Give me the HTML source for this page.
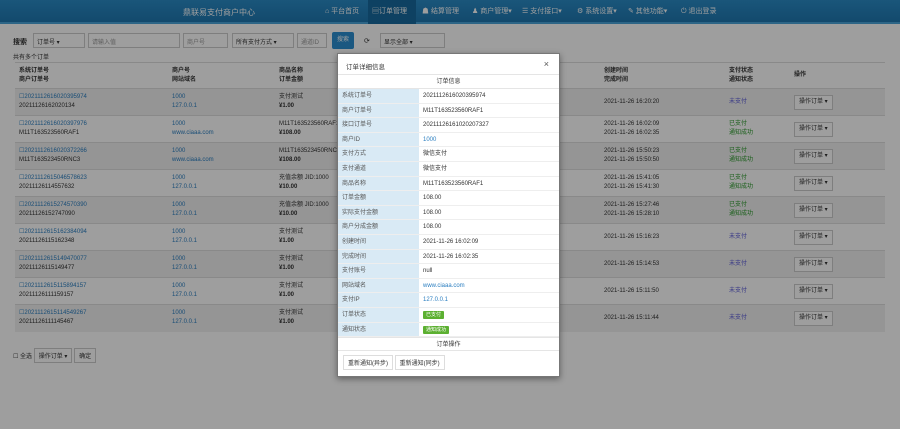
<!DOCTYPE html>
<html><head><meta charset="utf-8"><style>
*{box-sizing:border-box;margin:0;padding:0}
body{width:900px;height:429px;overflow:hidden;background:#fff;font-family:"Liberation Sans","Noto Sans CJK SC",sans-serif;font-size:7px;color:#333;position:relative}
.nav{height:24px;background:linear-gradient(#2a8bc6,#1f77b0);border-bottom:2px solid #4aa3d8;position:relative;color:#fff}
.nav .brand{position:absolute;left:183px;top:7px;font-size:8px}
.nav .item{position:absolute;top:0;height:24px;line-height:24px;font-size:7px}
.bar{position:absolute;top:33px;left:13px;height:16px;font-size:7px}
.inp{position:absolute;top:33px;height:15px;border:1px solid #ccc;background:#fff;color:#999;font-size:6px;padding:3px}
.btn{position:absolute;background:#2d8fd0;color:#fff;border-radius:2px;font-size:6px;text-align:center}
table{position:absolute;left:15px;top:62px;width:870px;border-collapse:collapse;font-size:6px}
td{height:27px;padding:2px 4px;border-top:1px solid #ddd;vertical-align:middle;line-height:9px}
tr:nth-child(even) td{background:#f0f0f0}
.hd td{height:26px;font-weight:bold;color:#333}
.a{color:#2a7ec0}.g{color:#2a9a2a}.p{color:#5a5ad8}
.op{border:1px solid #ccc;background:#fff;padding:2px 4px;display:inline-block}
.ov{position:absolute;left:0;top:0;width:900px;height:429px;background:rgba(0,0,0,.38)}
.modal{position:absolute;left:337px;top:53px;width:223px;height:324px;background:#fff;border:1px solid #777;box-shadow:0 2px 6px rgba(0,0,0,.4)}
.mh{height:21px;border-bottom:1px solid #e5e5e5;padding:7px 8px;font-size:6.5px;position:relative}
.mh span{position:absolute;right:10px;top:5px;font-size:9px;color:#555}
.st{text-align:center;height:14px;line-height:14px;font-size:6px;border-bottom:1px solid #e5e5e5}
.r{height:14.6px;line-height:14.6px;font-size:6px;border-bottom:1px solid #eee;display:flex}
.r b{font-weight:normal;width:81px;background:#d9eaf5;padding-left:4px;color:#555}
.r i{font-style:normal;padding-left:4px}
.lb{background:#5cb031;color:#fff;padding:0 3px;border-radius:1px;font-size:5px;line-height:8px;display:inline-block}
</style></head><body>
<div class="nav"><div class="brand">鼎联易支付商户中心</div>
<div class="item" style="left:325px">⌂ 平台首页</div>
<div class="item" style="left:368px;background:#176a9e;width:48px;padding-left:4px">▤订单管理</div>
<div class="item" style="left:422px">☗ 结算管理</div>
<div class="item" style="left:472px">♟ 商户管理▾</div>
<div class="item" style="left:522px">☰ 支付接口▾</div>
<div class="item" style="left:577px">⚙ 系统设置▾</div>
<div class="item" style="left:628px">✎ 其他功能▾</div>
<div class="item" style="left:681px">⏻ 退出登录</div>
</div>
<div class="bar" style="top:37px;font-weight:bold">搜索</div>
<div class="inp" style="left:33px;width:52px;color:#333">订单号 ▾</div>
<div class="inp" style="left:88px;width:92px">请输入值</div>
<div class="inp" style="left:183px;width:45px">商户号</div>
<div class="inp" style="left:232px;width:62px;color:#333">所有支付方式 ▾</div>
<div class="inp" style="left:297px;width:30px">通道ID</div>
<div class="btn" style="left:332px;top:32px;width:22px;height:17px;line-height:17px">搜索</div>
<div class="bar" style="left:364px;top:37px">⟳</div>
<div class="inp" style="left:380px;width:65px;color:#333">显示全部 ▾</div>
<div class="bar" style="top:52px;font-size:6px">共有多个订单</div>
<table>
<tr class="hd"><td style="width:153px">系统订单号<br>商户订单号</td><td style="width:107px">商户号<br>网站域名</td><td style="width:260px">商品名称<br>订单金额</td><td style="width:65px"></td><td style="width:125px">创建时间<br>完成时间</td><td style="width:65px">支付状态<br>通知状态</td><td>操作</td></tr>
<tr><td><span class="a">☐2021112616020395974</span><br>20211126162020134</td><td class="a">1000<br>127.0.0.1</td><td>支付测试<br><b>¥1.00</b></td><td></td><td>2021-11-26 16:20:20</td><td class="p">未支付</td><td><span class="op">操作订单 ▾</span></td></tr>
<tr><td><span class="a">☐2021112616020397976</span><br>M11T163523560RAF1</td><td class="a">1000<br>www.ciaaa.com</td><td>M11T163523560RAF1<br><b>¥108.00</b></td><td></td><td>2021-11-26 16:02:09<br>2021-11-26 16:02:35</td><td class="g">已支付<br>通知成功</td><td><span class="op">操作订单 ▾</span></td></tr>
<tr><td><span class="a">☐2021112616020372266</span><br>M11T163523450RNC3</td><td class="a">1000<br>www.ciaaa.com</td><td>M11T163523450RNC3<br><b>¥108.00</b></td><td></td><td>2021-11-26 15:50:23<br>2021-11-26 15:50:50</td><td class="g">已支付<br>通知成功</td><td><span class="op">操作订单 ▾</span></td></tr>
<tr><td><span class="a">☐2021112615046578623</span><br>20211126114557632</td><td class="a">1000<br>127.0.0.1</td><td>充值余额 JID:1000<br><b>¥10.00</b></td><td></td><td>2021-11-26 15:41:05<br>2021-11-26 15:41:30</td><td class="g">已支付<br>通知成功</td><td><span class="op">操作订单 ▾</span></td></tr>
<tr><td><span class="a">☐2021112615274570390</span><br>20211126152747090</td><td class="a">1000<br>127.0.0.1</td><td>充值余额 JID:1000<br><b>¥10.00</b></td><td></td><td>2021-11-26 15:27:46<br>2021-11-26 15:28:10</td><td class="g">已支付<br>通知成功</td><td><span class="op">操作订单 ▾</span></td></tr>
<tr><td><span class="a">☐2021112615162384094</span><br>20211126115162348</td><td class="a">1000<br>127.0.0.1</td><td>支付测试<br><b>¥1.00</b></td><td></td><td>2021-11-26 15:16:23</td><td class="p">未支付</td><td><span class="op">操作订单 ▾</span></td></tr>
<tr><td><span class="a">☐2021112615149470077</span><br>20211126115149477</td><td class="a">1000<br>127.0.0.1</td><td>支付测试<br><b>¥1.00</b></td><td></td><td>2021-11-26 15:14:53</td><td class="p">未支付</td><td><span class="op">操作订单 ▾</span></td></tr>
<tr><td><span class="a">☐2021112615115894157</span><br>20211126111159157</td><td class="a">1000<br>127.0.0.1</td><td>支付测试<br><b>¥1.00</b></td><td></td><td>2021-11-26 15:11:50</td><td class="p">未支付</td><td><span class="op">操作订单 ▾</span></td></tr>
<tr><td><span class="a">☐2021112615114549267</span><br>20211126111145467</td><td class="a">1000<br>127.0.0.1</td><td>支付测试<br><b>¥1.00</b></td><td></td><td>2021-11-26 15:11:44</td><td class="p">未支付</td><td><span class="op">操作订单 ▾</span></td></tr>
</table>
<div class="bar" style="top:348px;left:13px;font-size:6px">☐ 全选 <span class="op">操作订单 ▾</span> <span class="op">确定</span></div>
<div class="ov"></div>
<div class="modal">
<div class="mh">订单详细信息<span>×</span></div>
<div class="st">订单信息</div>
<div class="r"><b>系统订单号</b><i>2021112616020395974</i></div>
<div class="r"><b>商户订单号</b><i>M11T163523560RAF1</i></div>
<div class="r"><b>接口订单号</b><i>20211126161020207327</i></div>
<div class="r"><b>商户ID</b><i class="a">1000</i></div>
<div class="r"><b>支付方式</b><i>微信支付</i></div>
<div class="r"><b>支付通道</b><i>微信支付</i></div>
<div class="r"><b>商品名称</b><i>M11T163523560RAF1</i></div>
<div class="r"><b>订单金额</b><i>108.00</i></div>
<div class="r"><b>实际支付金额</b><i>108.00</i></div>
<div class="r"><b>商户分成金额</b><i>108.00</i></div>
<div class="r"><b>创建时间</b><i>2021-11-26 16:02:09</i></div>
<div class="r"><b>完成时间</b><i>2021-11-26 16:02:35</i></div>
<div class="r"><b>支付账号</b><i>null</i></div>
<div class="r"><b>网站域名</b><i class="a">www.ciaaa.com</i></div>
<div class="r"><b>支付IP</b><i class="a">127.0.0.1</i></div>
<div class="r"><b>订单状态</b><i><span class="lb">已支付</span></i></div>
<div class="r"><b>通知状态</b><i><span class="lb">通知成功</span></i></div>
<div class="st" style="border-top:1px solid #e5e5e5">订单操作</div>
<div style="padding:4px 5px;font-size:6px"><span class="op" style="border-color:#ddd">重新通知(异步)</span> <span class="op" style="border-color:#ddd">重新通知(同步)</span></div>
</div>
</body></html>
